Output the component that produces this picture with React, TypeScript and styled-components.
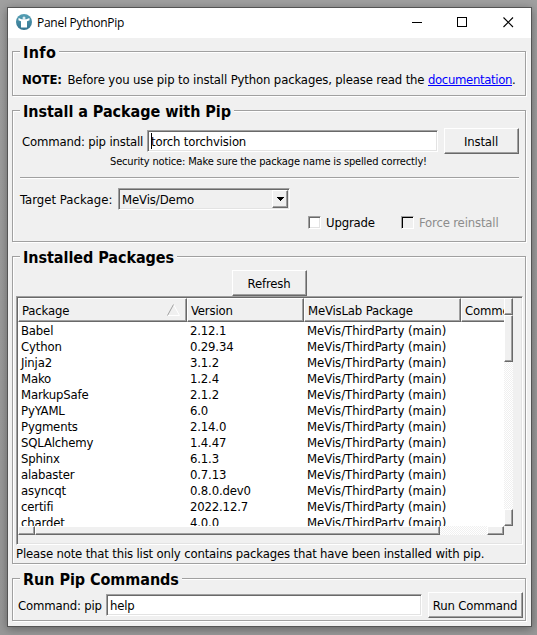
import React from 'react';
import styled, { createGlobalStyle } from 'styled-components';

const FACE = '#f0f0f0';
const SHADOW = '#a0a0a0';
const DARK = '#696969';
const LIGHT = '#e3e3e3';

const sunken = `
  border: 1px solid;
  border-color: ${SHADOW} #fff #fff ${SHADOW};
  box-shadow: inset 1px 1px 0 ${DARK}, inset -1px -1px 0 ${LIGHT};
`;
const raised = `
  background: ${FACE};
  border: 1px solid;
  border-color: #fff ${DARK} ${DARK} #fff;
  box-shadow: inset -1px -1px 0 ${SHADOW};
`;

const GlobalStyle = createGlobalStyle`
  *, *::before, *::after { box-sizing: border-box; }
  html, body { margin: 0; height: 635px; overflow: hidden; }
  body {
    background: #9c9c9c;
    color: #000;
    font: 13px/16px "DejaVu Sans Condensed", "DejaVu Sans", sans-serif;
    letter-spacing: -0.17px;
    white-space: nowrap;
  }
`;

const Desktop = styled.div`
  width: 537px;
  height: 635px;
  padding: 7px 5px 8px 7px;
  background: linear-gradient(#a0a0a0, #989898);
`;
const Window = styled.main`
  width: 525px;
  height: 620px;
  display: flex;
  flex-direction: column;
  border: 1px solid #545454;
  background: ${FACE};
  box-shadow: 0 2px 9px rgba(0, 0, 0, 0.35);
`;
const TitleBar = styled.header`
  height: 30px;
  flex: none;
  display: flex;
  align-items: center;
  padding: 0 17px 0 8px;
  background: #fff;
`;
const Badge = styled.svg`
  flex: none;
  margin-top: -2px;
`;
const Title = styled.h1`
  flex: 1;
  margin: 0 0 0 5px;
  font: 400 12px/16px "Open Sans", "Noto Sans", sans-serif;
  letter-spacing: -0.27px;
`;
const Controls = styled.div`
  display: flex;
  gap: 35px;
  height: 12px;
`;
const Body = styled.div`
  display: flex;
  flex-direction: column;
  padding: 13px 5px 0 4px;
`;
const Group = styled.section<{ $h: number; $after?: number }>`
  width: 514px;
  height: ${(p) => p.$h}px;
  margin-bottom: ${(p) => p.$after ?? 0}px;
  display: flex;
  flex-direction: column;
  border: 1px solid ${SHADOW};
  box-shadow: inset 1px 1px 0 #fff, 1px 1px 0 #fff;
`;
const Legend = styled.h2<{ $wide?: boolean }>`
  flex: none;
  align-self: flex-start;
  height: 19px;
  margin: -9px 0 -1px 7px;
  padding: 0 3px;
  background: ${FACE};
  font: 700 16px/19px "DejaVu Sans Condensed", "DejaVu Sans", sans-serif;
  letter-spacing: ${(p) => (p.$wide ? '0.35px' : '-0.05px')};
`;
const Note = styled.p`
  margin: 11px 0 0 9px;
  letter-spacing: -0.145px;
`;
const Bold = styled.b`
  margin-right: 2px;
  letter-spacing: -0.1px;
`;
const Link = styled.a`
  color: #0000ff;
  letter-spacing: -0.35px;
  text-decoration: underline;
  text-underline-offset: 1px;
`;
const Row = styled.div<{ $h: number; $top?: number; $left?: number }>`
  flex: none;
  display: flex;
  align-items: center;
  height: ${(p) => p.$h}px;
  margin-top: ${(p) => p.$top ?? 0}px;
  padding-left: ${(p) => p.$left ?? 0}px;
`;
const Label = styled.label<{ $w: number; $loose?: boolean }>`
  width: ${(p) => p.$w}px;
  padding-top: 2px;
  letter-spacing: ${(p) => (p.$loose ? '0.03px' : 'inherit')};
`;
const Field = styled.div<{ $w: number }>`
  ${sunken}
  display: flex;
  align-items: center;
  width: ${(p) => p.$w}px;
  height: 22px;
  margin-right: 6px;
  padding: 2px 0 0 3px;
  background: #fff;
`;
const Caret = styled.span`
  width: 1px;
  height: 16px;
  margin: -2px -1px 0 0;
  background: #000;
`;
const Button = styled.button<{ $w: number }>`
  ${raised}
  width: ${(p) => p.$w}px;
  height: 26px;
  padding: 2px 1px 0 0;
  color: inherit;
  font: inherit;
  letter-spacing: inherit;
`;
const SecurityNotice = styled.p`
  margin: 1px 0 0 97px;
  font-size: 11px;
  line-height: 14px;
  letter-spacing: -0.15px;
`;
const Divider = styled.hr`
  width: 499px;
  margin: 8px 0 0 7px;
  border: 0;
  border-top: 1px solid ${SHADOW};
  border-bottom: 1px solid #fff;
`;
const Combo = styled.div`
  ${sunken}
  display: flex;
  align-items: center;
  justify-content: space-between;
  width: 172px;
  height: 22px;
  padding: 0 1px 0 3px;
`;
const ComboValue = styled.span`
  padding-top: 2px;
  letter-spacing: -0.1px;
`;
const ComboArrow = styled.span`
  ${raised}
  display: flex;
  align-items: center;
  justify-content: center;
  width: 16px;
  height: 18px;
`;
const CheckBox = styled.span<{ $off?: boolean }>`
  ${sunken}
  width: 13px;
  height: 13px;
  margin-right: 5px;
  background: ${(p) => (p.$off ? FACE : '#fff')};
  ${(p) => p.$off && `box-shadow: inset 1px 1px 0 #000;`}
`;
const CheckLabel = styled.span<{ $off?: boolean }>`
  width: ${(p) => (p.$off ? 'auto' : '75px')};
  padding-top: 1px;
  color: ${(p) => (p.$off ? '#8c8c8c' : '#000')};
`;

const ListFrame = styled.div`
  ${sunken}
  flex: none;
  width: 507px;
  height: 249px;
  margin-left: 3px;
  padding: 1px;
`;
const ListGrid = styled.div`
  display: grid;
  grid-template-columns: 486px 9px;
  grid-template-rows: 228px 9px;
`;
const Viewport = styled.div`
  overflow: hidden;
  background: #fff;
`;
const HeaderRow = styled.div`
  display: flex;
  width: 600px;
`;
const HeaderCell = styled.div<{ $w: number }>`
  ${raised}
  display: flex;
  align-items: center;
  justify-content: space-between;
  width: ${(p) => p.$w}px;
  height: 24px;
  padding: 2px 6px 0 3px;
`;
const SortMark = styled.svg`
  margin-top: -2px;
`;
const Rows = styled.div`
  padding-top: 1px;
`;
const PackageRow = styled.div`
  display: grid;
  grid-template-columns: 169px 117px 157px;
  height: 16px;
  padding-left: 3px;
`;
const Origin = styled.span`
  letter-spacing: -0.04px;
`;
const ScrollTrack = styled.div<{ $vertical?: boolean }>`
  display: flex;
  flex-direction: ${(p) => (p.$vertical ? 'column' : 'row')};
  background: repeating-conic-gradient(#fff 0 25%, ${FACE} 0 50%) 0 0 / 2px 2px;
`;
const ScrollPiece = styled.div<{ $size: number; $push?: boolean; $vertical?: boolean }>`
  ${raised}
  flex: none;
  ${(p) => (p.$vertical ? 'height' : 'width')}: ${(p) => p.$size}px;
  ${(p) => p.$push && (p.$vertical ? 'margin-top: auto;' : 'margin-left: auto;')}
`;
const Footnote = styled.p`
  margin: 1px 0 0 3px;
`;

const AppIcon = () => (
  <Badge width="16" height="16" viewBox="0 0 16 16">
    <defs>
      <linearGradient id="disc" x1="0" y1="0" x2="0" y2="1">
        <stop offset="0" stopColor="#55a0b5" />
        <stop offset="1" stopColor="#34738f" />
      </linearGradient>
    </defs>
    <circle cx="8" cy="8" r="8" fill="url(#disc)" />
    <circle cx="8" cy="3.9" r="1.5" fill="#dcebf0" />
    <path d="M2.6 4 L5.6 5.2 H10.4 L13.4 4 L13.6 6.3 L11 7.2 V13.4 H5 V7.2 L2.4 6.3Z" fill="#fff" />
  </Badge>
);

const packages = [
  ['Babel', '2.12.1'],
  ['Cython', '0.29.34'],
  ['Jinja2', '3.1.2'],
  ['Mako', '1.2.4'],
  ['MarkupSafe', '2.1.2'],
  ['PyYAML', '6.0'],
  ['Pygments', '2.14.0'],
  ['SQLAlchemy', '1.4.47'],
  ['Sphinx', '6.1.3'],
  ['alabaster', '0.7.13'],
  ['asyncqt', '0.8.0.dev0'],
  ['certifi', '2022.12.7'],
  ['chardet', '4.0.0'],
];

export default function App() {
  return (
    <Desktop>
      <GlobalStyle />
      <Window>
        <TitleBar>
          <AppIcon />
          <Title>Panel PythonPip</Title>
          <Controls>
            <svg width="10" height="11" shapeRendering="crispEdges">
              <path d="M0 5.5H10" stroke="#000" />
            </svg>
            <svg width="11" height="11" shapeRendering="crispEdges">
              <path d="M.5 .5H9.5V9.5H.5Z" stroke="#000" fill="none" />
            </svg>
            <svg width="11" height="11">
              <path d="M.5 .5L10 10M10 .5L.5 10" stroke="#000" strokeWidth="1.1" />
            </svg>
          </Controls>
        </TitleBar>
        <Body>
          <Group $h={45} $after={14}>
            <Legend $wide>Info</Legend>
            <Note>
              <Bold>NOTE:</Bold> Before you use pip to install Python packages, please read the{' '}
              <Link>documentation</Link>.
            </Note>
          </Group>

          <Group $h={132} $after={14}>
            <Legend>Install a Package with Pip</Legend>
            <Row $h={26} $top={8} $left={9}>
              <Label $w={125}>Command: pip install</Label>
              <Field $w={291}>
                <Caret />
                torch torchvision
              </Field>
              <Button $w={75}>Install</Button>
            </Row>
            <SecurityNotice>Security notice: Make sure the package name is spelled correctly!</SecurityNotice>
            <Divider />
            <Row $h={22} $top={9} $left={7}>
              <Label $w={98} $loose>
                Target Package:
              </Label>
              <Combo>
                <ComboValue>MeVis/Demo</ComboValue>
                <ComboArrow>
                  <svg width="7" height="4" shapeRendering="crispEdges">
                    <path d="M0 0H7V1H6V2H5V3H4V4H3V3H2V2H1V1H0Z" />
                  </svg>
                </ComboArrow>
              </Combo>
            </Row>
            <Row $h={15} $top={5} $left={295}>
              <CheckBox />
              <CheckLabel>Upgrade</CheckLabel>
              <CheckBox $off />
              <CheckLabel $off>Force reinstall</CheckLabel>
            </Row>
          </Group>

          <Group $h={308} $after={14}>
            <Legend>Installed Packages</Legend>
            <Row $h={26} $top={4} $left={219}>
              <Button $w={75}>Refresh</Button>
            </Row>
            <ListFrame>
              <ListGrid>
                <Viewport>
                  <HeaderRow>
                    <HeaderCell $w={169}>
                      Package
                      <SortMark width="13" height="12" viewBox="0 0 13 12">
                        <path d="M.5 11.5H12.5L6.5 .5" stroke="#fff" fill="none" />
                        <path d="M.5 11.5L6.5 .5" stroke="#a0a0a0" />
                      </SortMark>
                    </HeaderCell>
                    <HeaderCell $w={117}>Version</HeaderCell>
                    <HeaderCell $w={157}>MeVisLab Package</HeaderCell>
                    <HeaderCell $w={120}>Comment</HeaderCell>
                  </HeaderRow>
                  <Rows>
                    {packages.map(([name, version]) => (
                      <PackageRow key={name}>
                        <span>{name}</span>
                        <span>{version}</span>
                        <Origin>MeVis/ThirdParty (main)</Origin>
                      </PackageRow>
                    ))}
                  </Rows>
                </Viewport>
                <ScrollTrack $vertical>
                  <ScrollPiece $vertical $size={17} />
                  <ScrollPiece $vertical $size={47} />
                  <ScrollPiece $vertical $size={17} $push />
                </ScrollTrack>
                <ScrollTrack>
                  <ScrollPiece $size={17} />
                  <ScrollPiece $size={405} />
                  <ScrollPiece $size={17} $push />
                </ScrollTrack>
              </ListGrid>
            </ListFrame>
            <Footnote>Please note that this list only contains packages that have been installed with pip.</Footnote>
          </Group>

          <Group $h={43}>
            <Legend>Run Pip Commands</Legend>
            <Row $h={26} $top={4} $left={5}>
              <Label $w={88}>Command: pip</Label>
              <Field $w={316}>help</Field>
              <Button $w={95}>Run Command</Button>
            </Row>
          </Group>
        </Body>
      </Window>
    </Desktop>
  );
}
